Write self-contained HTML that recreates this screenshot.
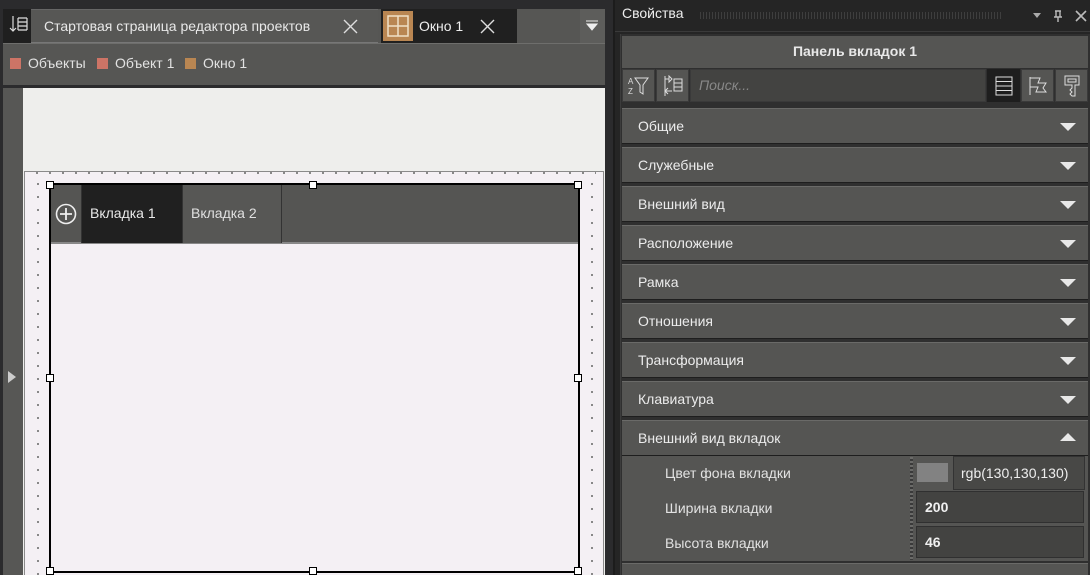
<!DOCTYPE html>
<html><head><meta charset="utf-8"><style>
*{box-sizing:border-box;margin:0;padding:0}
body{width:1090px;height:575px;background:#2b2b2d;font-family:"Liberation Sans",sans-serif;position:relative;overflow:hidden;color:#e6e6e6}
.a{position:absolute}
.sec{position:absolute;left:622px;width:466px;height:36px;background:#555553;border-top:1px solid #6a6a68;border-bottom:1px solid #1e1e1e;font-size:14px;line-height:34px;padding-left:16px;color:#ececec}
.sec:after{content:"";position:absolute;right:12px;top:14px;border-left:8px solid transparent;border-right:8px solid transparent;border-top:8px solid #e8e8e8}
.sec.up:after{border-top:none;border-bottom:8px solid #e8e8e8;top:12px}
.row{position:absolute;left:622px;width:466px;height:35px;background:#555553;font-size:14px;color:#e2e2e2;line-height:35px;padding-left:43px}
.val{position:absolute;left:916px;width:168px;height:32px;background:#434341;border:1px solid #303030;font-size:14px;font-weight:bold;line-height:30px;padding-left:8px;color:#f0f0f0}
.tb{position:absolute;top:69px;height:33px;width:33px;background:#555553;border:1px solid #3a3a3a}
</style></head><body>
<div class="a" style="left:3px;top:9px;width:602px;height:76px;background:#565654"></div>
<div class="a" style="left:3px;top:9px;width:28px;height:34px;background:#1f1f1f"></div>
<svg class="a" style="left:9px;top:15px" width="20" height="22" viewBox="0 0 20 22"><path d="M4 1V16M1 13L4 16L7 13M9 3H18M9 7H18M9 11H18M9 15H18M9 3V15M18 3V15" stroke="#ddd" stroke-width="1.2" fill="none"/></svg>
<div class="a" style="left:31px;top:9px;width:347px;height:34px;background:#575755;border-top:1px solid #666;border-bottom:1px solid #777;font-size:14px;line-height:32px;padding-left:13px;color:#e8e8e8">Стартовая страница редактора проектов</div>
<svg class="a" style="left:343px;top:19px" width="15" height="15"><path d="M1 1L14 14M14 1L1 14" stroke="#ddd" stroke-width="1.4"/></svg>
<div class="a" style="left:381px;top:9px;width:136px;height:34px;background:#202020"></div>
<div class="a" style="left:383px;top:11px;width:30px;height:30px;background:#b98652"></div>
<svg class="a" style="left:387px;top:15px" width="22" height="22"><path d="M1 1H21V21H1ZM11 1V21M1 11H21" stroke="#f0e0c8" stroke-width="1.5" fill="none"/></svg>
<div class="a" style="left:419px;top:9px;font-size:14px;line-height:34px;color:#eee">Окно 1</div>
<svg class="a" style="left:480px;top:19px" width="15" height="15"><path d="M1 1L14 14M14 1L1 14" stroke="#ddd" stroke-width="1.4"/></svg>
<div class="a" style="left:580px;top:9px;width:25px;height:34px;background:#5d5d5b"></div>
<svg class="a" style="left:586px;top:20px" width="12" height="12"><path d="M0 1H12M1 4H11L6 10Z" stroke="#eee" fill="#eee"/></svg>
<div class="a" style="left:3px;top:43px;width:602px;height:1px;background:#6e6e6c"></div>
<div class="a" style="left:10px;top:58px;width:11px;height:11px;background:#cd7466"></div>
<div class="a" style="left:28px;top:55px;font-size:14px;color:#e2e2e2">Объекты</div>
<div class="a" style="left:97px;top:58px;width:11px;height:11px;background:#cd7466"></div>
<div class="a" style="left:115px;top:55px;font-size:14px;color:#e2e2e2">Объект 1</div>
<div class="a" style="left:185px;top:58px;width:11px;height:11px;background:#b98652"></div>
<div class="a" style="left:203px;top:55px;font-size:14px;color:#e2e2e2">Окно 1</div>
<div class="a" style="left:3px;top:88px;width:20px;height:487px;background:#575755"></div>
<div class="a" style="left:8px;top:371px;border-top:6px solid transparent;border-bottom:6px solid transparent;border-left:8px solid #ccc"></div>
<div class="a" style="left:23px;top:88px;width:582px;height:487px;background:#eeeeec"></div>
<div class="a" style="left:24px;top:171px;width:580px;height:404px;background:#f4f0f4;border:1px solid #8a8a8a;border-bottom:none"></div>
<div class="a" style="left:591px;top:183px;width:2px;height:392px;background:repeating-linear-gradient(#888 0 2px,#f4f0f4 2px 13px)"></div>
<div class="a" style="left:37px;top:183px;width:2px;height:392px;background:repeating-linear-gradient(#888 0 2px,#f4f0f4 2px 13px)"></div>
<div class="a" style="left:36px;top:172px;width:560px;height:2px;background:repeating-linear-gradient(90deg,#888 0 2px,transparent 2px 13px)"></div>
<div class="a" style="left:49px;top:183px;width:531px;height:390px;border:2px solid #000;background:#f4f0f4"></div>
<div class="a" style="left:51px;top:185px;width:527px;height:59px;background:#555553;border-bottom:2px solid #888"></div>
<div class="a" style="left:81px;top:185px;width:1px;height:58px;background:#333"></div>
<svg class="a" style="left:55px;top:203px" width="22" height="22"><circle cx="11" cy="11" r="9.5" stroke="#eee" stroke-width="1.6" fill="none"/><path d="M11 5V17M5 11H17" stroke="#eee" stroke-width="1.8"/></svg>
<div class="a" style="left:82px;top:185px;width:100px;height:58px;background:#202020;font-size:14px;line-height:56px;padding-left:8px;color:#e8e8e8">Вкладка 1</div>
<div class="a" style="left:182px;top:185px;width:100px;height:58px;background:#575755;border-left:1px solid #333;border-right:1px solid #333;font-size:14px;line-height:56px;padding-left:8px;color:#e0e0e0">Вкладка 2</div>
<div class="a" style="left:309px;top:181px;width:8px;height:8px;background:#fff;border:1px solid #000"></div>
<div class="a" style="left:574px;top:181px;width:8px;height:8px;background:#fff;border:1px solid #000"></div>
<div class="a" style="left:46px;top:181px;width:8px;height:8px;background:#fff;border:1px solid #000"></div>
<div class="a" style="left:46px;top:374px;width:8px;height:8px;background:#fff;border:1px solid #000"></div>
<div class="a" style="left:574px;top:374px;width:8px;height:8px;background:#fff;border:1px solid #000"></div>
<div class="a" style="left:46px;top:567px;width:8px;height:8px;background:#fff;border:1px solid #000"></div>
<div class="a" style="left:309px;top:567px;width:8px;height:8px;background:#fff;border:1px solid #000"></div>
<div class="a" style="left:574px;top:567px;width:8px;height:8px;background:#fff;border:1px solid #000"></div>
<div class="a" style="left:613px;top:0;width:2px;height:575px;background:#1c1c1c"></div>
<div class="a" style="left:615px;top:0;width:475px;height:575px;background:#252525"></div>
<div class="a" style="left:622px;top:5px;font-size:14px;color:#eee">Свойства</div>
<div class="a" style="left:700px;top:12px;width:302px;height:7px;background:repeating-linear-gradient(90deg,#444 0 1px,transparent 1px 3px);opacity:.8"></div>
<div class="a" style="left:1033px;top:13px;border-left:4px solid transparent;border-right:4px solid transparent;border-top:5px solid #aaa"></div>
<svg class="a" style="left:1053px;top:10px" width="10" height="12"><path d="M2 1H8M3 1V7M7 1V7M1 7H9M5 7V12" stroke="#bbb" stroke-width="1.4"/></svg>
<svg class="a" style="left:1075px;top:10px" width="12" height="12"><path d="M1 1L11 11M11 1L1 11" stroke="#bbb" stroke-width="1.6"/></svg>
<div class="a" style="left:615px;top:31px;width:475px;height:1px;background:#3a3a3a"></div>
<div class="a" style="left:620px;top:34px;width:470px;height:541px;background:#2f2f2f;border-left:1px solid #3c3c3c"></div>
<div class="a" style="left:622px;top:36px;width:466px;height:32px;background:#555553;font-size:14px;font-weight:bold;text-align:center;line-height:30px;color:#e8e8e8">Панель вкладок 1</div>
<div class="tb" style="left:622px"></div>
<svg class="a" style="left:628px;top:75px" width="22" height="22"><text x="0" y="9" font-size="8" fill="#ddd" font-family="Liberation Sans">A</text><text x="0" y="19" font-size="8" fill="#ddd" font-family="Liberation Sans">Z</text><path d="M7 3H20L15 10V19L12 17V10Z" stroke="#ddd" fill="none"/></svg>
<div class="tb" style="left:656px"></div>
<svg class="a" style="left:662px;top:75px" width="22" height="22"><path d="M3 1V21M3 4H7M7 1V7L10 4ZM12 4H20V16H12ZM12 8H20M12 12H20M3 16H10M6 13L3 16L6 19" stroke="#ddd" fill="none"/></svg>
<div class="a" style="left:690px;top:69px;width:296px;height:33px;background:#434341;border:1px solid #3a3a3a;font-size:14px;font-style:italic;color:#888;line-height:31px;padding-left:8px">Поиск...</div>
<div class="a" style="left:987px;top:69px;width:33px;height:33px;background:#1e1e1e"></div>
<svg class="a" style="left:995px;top:76px" width="18" height="20"><path d="M1 1H17V19H1ZM1 5.5H17M1 10H17M1 14.5H17" stroke="#ddd" fill="none"/></svg>
<div class="tb" style="left:1021px"></div>
<svg class="a" style="left:1028px;top:76px" width="20" height="20"><path d="M2 1V19M2 2H12L10 7L18 7L15 12L18 16H8L10 11H2" stroke="#ddd" fill="none"/></svg>
<div class="tb" style="left:1055px;width:33px"></div>
<svg class="a" style="left:1063px;top:75px" width="18" height="22"><path d="M2 1H16V10H12V21H9L7 19L9 17L7 15L9 13V10H2ZM5 4H13V7H5Z" stroke="#ddd" fill="none"/></svg>
<div class="sec" style="top:108px">Общие</div>
<div class="sec" style="top:147px">Служебные</div>
<div class="sec" style="top:186px">Внешний вид</div>
<div class="sec" style="top:225px">Расположение</div>
<div class="sec" style="top:264px">Рамка</div>
<div class="sec" style="top:303px">Отношения</div>
<div class="sec" style="top:342px">Трансформация</div>
<div class="sec" style="top:381px">Клавиатура</div>
<div class="sec up" style="top:420px">Внешний вид вкладок</div>
<div class="row" style="top:456px;height:105px"></div>
<div class="a" style="left:910px;top:457px;width:3px;height:103px;background:repeating-linear-gradient(#6a6a68 0 2px,#3a3a3a 2px 4px)"></div>
<div class="a" style="left:665px;top:465px;font-size:14px;color:#e2e2e2">Цвет фона вкладки</div>
<div class="a" style="left:665px;top:500px;font-size:14px;color:#e2e2e2">Ширина вкладки</div>
<div class="a" style="left:665px;top:535px;font-size:14px;color:#e2e2e2">Высота вкладки</div>
<div class="a" style="left:917px;top:463px;width:31px;height:19px;background:#828282"></div>
<div class="a" style="left:953px;top:456px;width:132px;height:34px;background:#484846;border:1px solid #333;font-size:14px;line-height:32px;padding-left:7px;color:#eee">rgb(130,130,130)</div>
<div class="val" style="top:491px">200</div>
<div class="val" style="top:526px">46</div>
<div class="a" style="left:622px;top:563px;width:466px;height:12px;background:#555553;border-top:1px solid #6a6a68"></div>
</body></html>
